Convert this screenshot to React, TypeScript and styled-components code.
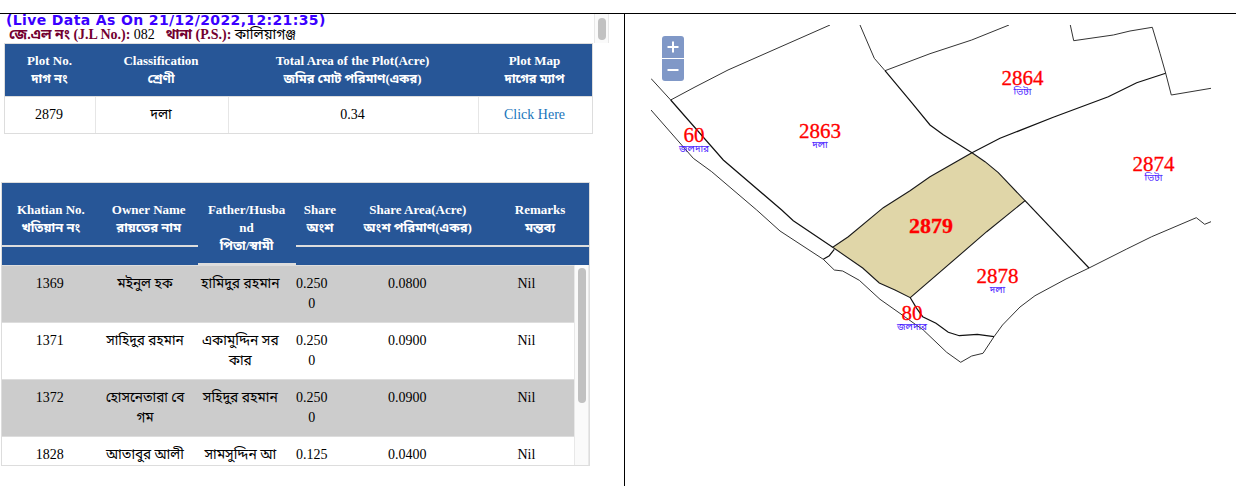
import React from "react";
import styled, { createGlobalStyle } from "styled-components";

const GlobalStyle = createGlobalStyle`
  * { box-sizing: border-box; }
  body {
    margin: 0;
    background: #fff;
    color: #000;
    font-family: "Liberation Serif", "Noto Sans Bengali", "Noto Sans", serif;
    font-size: 14px;
    line-height: 20px;
    overflow: hidden;
  }
`;

const Page = styled.div`
  width: 1236px;
  height: 490px;
  padding-top: 13px;
`;

const Frame = styled.main`
  display: grid;
  grid-template-columns: 625px 1fr;
  height: 473px;
  border-top: 1px solid #000;
`;

const DataPane = styled.section`
  border-right: 1px solid #000;
  overflow: hidden;
`;

const Heading = styled.header`
  display: flex;
  justify-content: space-between;
  height: 29px;
  padding-right: 15px;
`;

const HeadingText = styled.div`
  padding-left: 6px;
  white-space: nowrap;
`;

const LiveStamp = styled.div`
  height: 12px;
  color: #3a00ff;
  font: bold 14px/13px "DejaVu Sans", sans-serif;
  letter-spacing: 0.37px;
`;

const Place = styled.div`
  padding-left: 3px;
  line-height: 17px;
  letter-spacing: -0.03px;
`;

const PlaceLabel = styled.b<{ $gap?: boolean }>`
  color: #730030;
  margin-left: ${(p) => (p.$gap ? "7.5px" : "0")};
`;

const Track = styled.div<{ $pad: string }>`
  width: 15px;
  padding: ${(p) => p.$pad};
  background: #fafafa;
  border: solid #e8e8e8;
  border-width: 0 1px;
`;

const Thumb = styled.div<{ $h: number }>`
  width: 8px;
  height: ${(p) => p.$h}px;
  border-radius: 4px;
  background: #c1c1c1;
`;

const PlotTable = styled.div`
  width: 589px;
  margin-left: 4px;
  border: 1px solid #ddd;
`;

const PlotRow = styled.div<{ $head?: boolean }>`
  display: grid;
  grid-template-columns: 90px 133px 250px 1fr;
  height: ${(p) => (p.$head ? 52 : 37)}px;
  padding-top: ${(p) => (p.$head ? "8px" : "0")};
  background: ${(p) => (p.$head ? "#275697" : "#fff")};
  color: ${(p) => (p.$head ? "#fff" : "#000")};
  border-top: ${(p) => (p.$head ? "0" : "1px solid #ddd")};
  font-weight: ${(p) => (p.$head ? "bold" : "normal")};
  text-align: center;
`;

const PlotCell = styled.div`
  line-height: 36px;
  padding-right: 2px;
  & + & { border-left: 1px solid #e6e6e6; }
`;

const PlotHeadCell = styled.div`
  padding-right: 1px;
`;

const Line = styled.div<{ $size?: number; $h?: number }>`
  height: ${(p) => p.$h ?? 20}px;
  line-height: ${(p) => p.$h ?? 20}px;
  font-size: ${(p) => p.$size ?? 14}px;
  white-space: nowrap;
`;

const PlotLink = styled.a`
  color: #1a75bb;
`;

const OwnerTable = styled.div`
  display: flex;
  flex-direction: column;
  width: 589px;
  height: 284px;
  margin: 48px 0 0 1px;
  border: 1px solid #ddd;
`;

const ownerColumns = "2fr 2fr 2fr 1fr 3fr 2fr";

const OwnerHead = styled.div`
  display: grid;
  grid-template-columns: ${ownerColumns};
  align-items: start;
  height: 82px;
  background: #275697;
  color: #fff;
  font-weight: bold;
  text-align: center;
`;

const OwnerHeadCell = styled.div<{ $tall?: boolean }>`
  display: flex;
  flex-direction: column;
  align-items: center;
  min-width: 0;
  height: ${(p) => (p.$tall ? 82 : 64)}px;
  padding-top: 18px;
  border-bottom: 2px solid #ddd;
`;

const OwnerScroll = styled.div`
  display: grid;
  grid-template-columns: 572px 15px;
  height: 200px;
  overflow: hidden;
`;

const OwnerRow = styled.div<{ $shade: boolean }>`
  display: grid;
  grid-template-columns: ${ownerColumns};
  height: 57px;
  padding-top: 8px;
  border-top: 1px solid #ddd;
  background: ${(p) => (p.$shade ? "#ccc" : "#fff")};
`;

const OwnerCell = styled.div`
  display: flex;
  flex-direction: column;
  align-items: center;
  min-width: 0;
`;

const MapPane = styled.section`
  position: relative;
`;

const ZoomControl = styled.div`
  position: absolute;
  left: 37px;
  top: 22px;
  display: grid;
  gap: 1px;
`;

const ZoomButton = styled.button<{ $top?: boolean }>`
  display: grid;
  place-items: center;
  width: 22px;
  height: 22px;
  padding: 0;
  border: 0;
  border-radius: ${(p) => (p.$top ? "3px 3px 0 0" : "0 0 3px 3px")};
  background: #8098c7;
`;

const Drawing = styled.svg`
  display: block;
  margin: 11px 0 0 26px;
`;

const owners = [
  ["1369", ["মইনুল হক"], ["হামিদুর রহমান"], ["0.250", "0"], "0.0800"],
  ["1371", ["সাহিদুর রহমান"], ["একামুদ্দিন সর", "কার"], ["0.250", "0"], "0.0900"],
  ["1372", ["হোসনেতারা বে", "গম"], ["সহিদুর রহমান"], ["0.250", "0"], "0.0900"],
  ["1828", ["আতাবুর আলী"], ["সামসুদ্দিন আ"], ["0.125"], "0.0400"],
] as [string, string[], string[], string[], string][];

const ownerHeads = [
  ["Khatian No.", "খতিয়ান নং"],
  ["Owner Name", "রায়তের নাম"],
  ["Father/Husba", "nd", "পিতা/স্বামী"],
  ["Share", "অংশ"],
  ["Share Area(Acre)", "অংশ পরিমাণ(একর)"],
  ["Remarks", "মন্তব্য"],
];

const plotHeads = [
  ["Plot No.", "দাগ নং"],
  ["Classification", "শ্রেণী"],
  ["Total Area of the Plot(Acre)", "জমির মোট পরিমাণ(একর)"],
  ["Plot Map", "দাগের ম্যাপ"],
];

const outerLines = [
  "830,25 728,70 695,87 670.7,100",
  "651,78.5 670.7,100",
  "651,110 693.3,158.3 711.7,171.7 756.7,210 780,231 823.3,259.3 834.3,270 842.7,271 859.3,280.3 880,299.3 902.7,315.3 923.3,330 946.7,352.3 960.7,362.3 971.7,356 983,353.3 994,336.7 1002.5,325 1020,307 1035,295.7 1066,279 1089,268 1126.7,249 1151.7,236.7 1196.3,217.7 1204.7,224.3 1211,221.7",
  "860,25 874.3,58.3 885,70.7",
  "885,70.7 930,53.7 971.7,40 1009,25",
  "1070.3,25 1073.7,40.7 1113.3,35 1130,31 1152.3,27.3 1160,53.3 1165.7,73.3 1171.3,95 1211,88.3",
];

const sharedLines = [
  "670.7,100 723.3,160 781.7,210 793.3,220.7 832.7,247.3",
  "823.3,259.3 829.3,255.7 834.3,249.3",
  "885,70.7 911.7,102.7 930,125 943.3,134.7 972,152.7",
  "972,152.7 1000,138.3 1053.3,117.3 1108.3,96.7 1136.7,82.7 1165.7,73.3",
  "1025,200.7 1089,268",
  "910.3,297.7 916.7,308.3 922.7,316.7 936,323.3 948.3,332.3 959.3,335.7 977.3,334.3 994,336.7",
];

const selectedPlot =
  "972,152.7 985,161.7 998.3,172.7 1025,200.7 986.7,231.7 910.3,297.7 895,290 879.3,283 862.7,268 832.7,247.3 848.3,236.7 883.3,207.7 910,190.7 930,176.7";

const plots: [string, string, number, number][] = [
  ["60", "জলদার", 694, 142],
  ["2863", "দলা", 820, 138],
  ["2864", "ভিটা", 1022.5, 85],
  ["2874", "ভিটা", 1153.5, 171],
  ["2878", "দলা", 997.5, 283],
  ["80", "জলদার", 912, 319.5],
];

function Lines({ items, size }: { items: string[]; size?: number }) {
  return (
    <>
      {items.map((t, i) => (
        <Line key={i} $size={size}>{t}</Line>
      ))}
    </>
  );
}

export default function App() {
  return (
    <Page>
      <GlobalStyle />
      <Frame>
        <DataPane>
          <Heading>
            <HeadingText>
              <LiveStamp>(Live Data As On 21/12/2022,12:21:35)</LiveStamp>
              <Place>
                <PlaceLabel>জে.এল নং (J.L No.):</PlaceLabel> 082{" "}
                <PlaceLabel $gap>থানা (P.S.):</PlaceLabel> কালিয়াগঞ্জ
              </Place>
            </HeadingText>
            <Track $pad="4px 0 0 3px">
              <Thumb $h={22} />
            </Track>
          </Heading>
          <PlotTable>
            <PlotRow $head>
              {plotHeads.map(([en, bn]) => (
                <PlotHeadCell key={en}>
                  <Line $h={18} $size={13}>{en}</Line>
                  <Line $h={18} $size={12.8}>{bn}</Line>
                </PlotHeadCell>
              ))}
            </PlotRow>
            <PlotRow>
              <PlotCell>2879</PlotCell>
              <PlotCell>দলা</PlotCell>
              <PlotCell>0.34</PlotCell>
              <PlotCell>
                <PlotLink>Click Here</PlotLink>
              </PlotCell>
            </PlotRow>
          </PlotTable>
          <OwnerTable>
            <OwnerHead>
              {ownerHeads.map((lines) => (
                <OwnerHeadCell key={lines[0]} $tall={lines.length > 2}>
                  {lines.map((t) => (
                    <Line key={t} $h={18} $size={13}>
                      {t}
                    </Line>
                  ))}
                </OwnerHeadCell>
              ))}
            </OwnerHead>
            <OwnerScroll>
              <div>
                {owners.map(([no, owner, father, share, area], i) => (
                  <OwnerRow key={no} $shade={i % 2 === 0}>
                    <OwnerCell><Line>{no}</Line></OwnerCell>
                    <OwnerCell><Lines items={owner} size={13.6} /></OwnerCell>
                    <OwnerCell><Lines items={father} size={13.8} /></OwnerCell>
                    <OwnerCell><Lines items={share} /></OwnerCell>
                    <OwnerCell><Line>{area}</Line></OwnerCell>
                    <OwnerCell><Line>Nil</Line></OwnerCell>
                  </OwnerRow>
                ))}
              </div>
              <Track $pad="3px 0 0 3px">
                <Thumb $h={135} />
              </Track>
            </OwnerScroll>
          </OwnerTable>
        </DataPane>
        <MapPane>
          <Drawing width="560" height="345" viewBox="651 25 560 345" fill="none">
            <polygon points={selectedPlot} fill="#e0d6a8" stroke="#1a1a1a" strokeWidth="1.1" />
            {outerLines.map((p) => (
              <polyline key={p} points={p} stroke="#333" strokeWidth="1" />
            ))}
            {sharedLines.map((p) => (
              <polyline key={p} points={p} stroke="#111" strokeWidth="1.2" />
            ))}
            <g textAnchor="middle">
              {plots.map(([no, kind, x, y]) => (
                <React.Fragment key={no}>
                  <text x={x} y={y} fontSize="21" fill="#f00" stroke="#f00" strokeWidth="0.3">{no}</text>
                  <text x={x} y={y + 10} fontSize="10" fill="#4a1cff">{kind}</text>
                </React.Fragment>
              ))}
              <text x="931" y="233" fontSize="22" fontWeight="bold" fill="#f00" stroke="#f00" strokeWidth="0.3">2879</text>
            </g>
          </Drawing>
          <ZoomControl>
            <ZoomButton $top aria-label="Zoom in">
              <svg width="12" height="12" stroke="#fff" strokeWidth="2">
                <path d="M0.5 6H11.5M6 0.5V11.5" />
              </svg>
            </ZoomButton>
            <ZoomButton aria-label="Zoom out">
              <svg width="12" height="12" stroke="#fff" strokeWidth="2">
                <path d="M0.5 6H11.5" />
              </svg>
            </ZoomButton>
          </ZoomControl>
        </MapPane>
      </Frame>
    </Page>
  );
}
